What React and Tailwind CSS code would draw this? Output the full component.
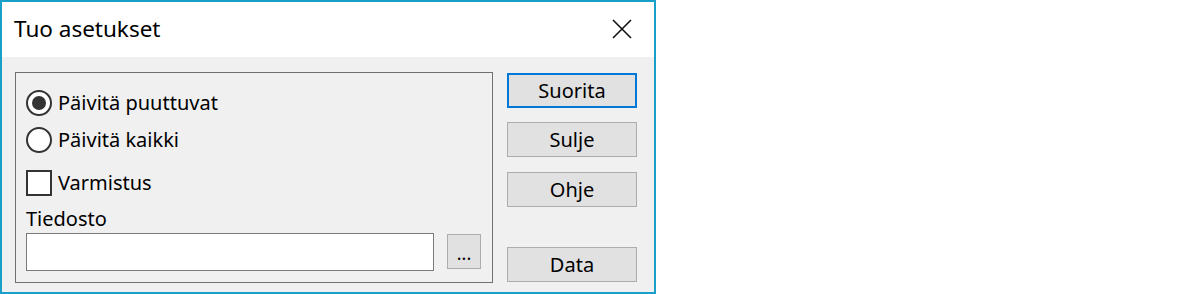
const FONT = { fontFamily: '"Noto Sans", "Open Sans", sans-serif' };

function Radio({ checked, label }) {
  return (
    <div className="flex items-center h-[26px]">
      <span className="w-[26px] h-[26px] rounded-full border-2 border-[#333333] bg-white flex items-center justify-center">
        {checked && <span className="w-[14px] h-[14px] rounded-full bg-[#333333]" />}
      </span>
      <span className="ml-[6px] text-[20px] leading-none text-black">{label}</span>
    </div>
  );
}

function Button({ children, primary }) {
  return (
    <button
      className={`w-[130px] h-[35px] bg-[#e1e1e1] text-[20px] leading-none text-black flex items-center justify-center ${
        primary ? 'border-2 border-[#0078d7]' : 'border border-[#adadad]'
      }`}
    >
      {children}
    </button>
  );
}

export default function App() {
  return (
    <div className="w-[1200px] h-[294px] bg-white" style={FONT}>
      <div className="w-[656px] h-[294px] border-2 border-[#18a0c8] flex flex-col">
        <div className="h-[55px] bg-white flex items-center justify-between pl-[12px] pr-[22px]">
          <span className="text-[22.5px] text-black leading-none">Tuo asetukset</span>
          <svg width="20" height="20" viewBox="0 0 20 20" className="-mt-[2px]">
            <path d="M1 1 L19 19 M19 1 L1 19" stroke="#111" strokeWidth="1.6" fill="none" />
          </svg>
        </div>
        <div className="flex-1 bg-[#f0f0f0] flex pl-[13px] pt-[15px]">
          <div className="w-[478px] h-[211px] border border-[#707070] pl-[10px] pt-[17px] flex flex-col">
            <Radio checked label="Päivitä puuttuvat" />
            <div className="mt-[11px]">
              <Radio label="Päivitä kaikki" />
            </div>
            <div className="flex items-center h-[26px] mt-[17px]">
              <span className="w-[26px] h-[26px] border-2 border-[#333333] bg-white" />
              <span className="ml-[6px] text-[20px] leading-none text-black">Varmistus</span>
            </div>
            <div className="mt-[12px] text-[20px] leading-[22px] text-black">Tiedosto</div>
            <div className="flex items-start mt-[3px]">
              <div className="w-[408px] h-[38px] bg-white border border-[#7a7a7a]" />
              <button className="ml-[13px] mt-[1px] w-[34px] h-[35px] bg-[#e1e1e1] border border-[#adadad] text-[18px] leading-none text-black flex items-end justify-center pb-[6px]">
                ...
              </button>
            </div>
          </div>
          <div className="ml-[14px] pt-[1px] flex flex-col">
            <Button primary>Suorita</Button>
            <div className="mt-[14px]">
              <Button>Sulje</Button>
            </div>
            <div className="mt-[15px]">
              <Button>Ohje</Button>
            </div>
            <div className="mt-[40px]">
              <Button>Data</Button>
            </div>
          </div>
        </div>
      </div>
    </div>
  );
}
